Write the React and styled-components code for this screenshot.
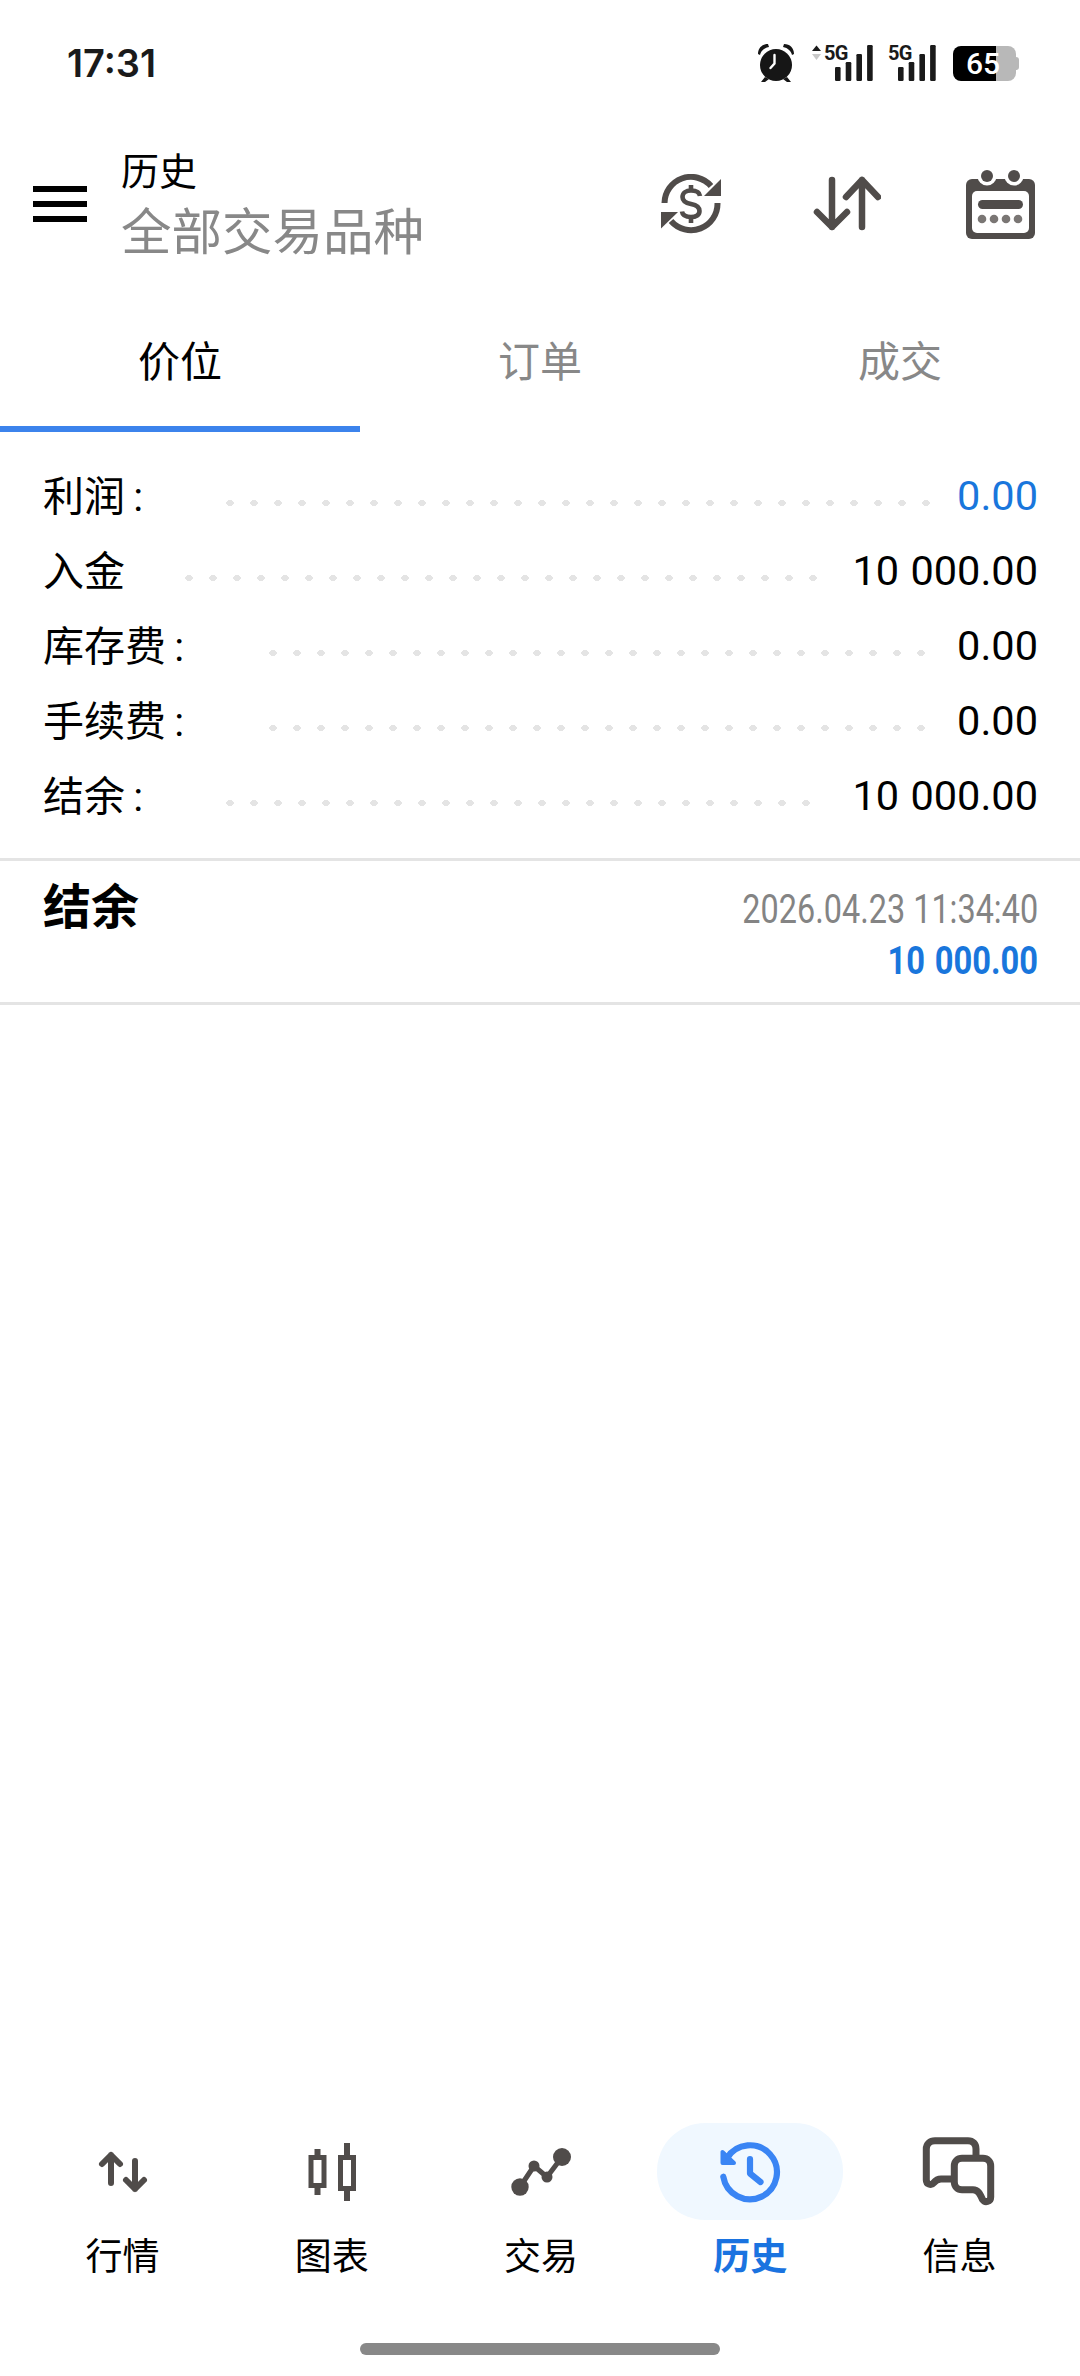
import React from 'react'
import styled, { createGlobalStyle } from 'styled-components'

const GlobalStyle = createGlobalStyle`
  html, body {
    margin: 0;
    padding: 0;
    background: #fff;
  }
  body {
    font-family: Roboto, "Noto Sans CJK SC", sans-serif;
  }
`

const ICON = '#504c4a'
const BLUE = '#1976dc'

const summary = [
  { label: '利润 :', col: 183, dots: 30, value: '0.00', blue: true },
  { label: '入金', col: 142, dots: 27, value: '10 000.00' },
  { label: '库存费 :', col: 226, dots: 28, value: '0.00' },
  { label: '手续费 :', col: 226, dots: 28, value: '0.00' },
  { label: '结余 :', col: 183, dots: 25, value: '10 000.00' },
]

const navItems = [
  { label: '行情', icon: <QuotesIcon /> },
  { label: '图表', icon: <ChartIcon /> },
  { label: '交易', icon: <TradeIcon /> },
  { label: '历史', icon: <HistoryIcon />, active: true },
  { label: '信息', icon: <MessagesIcon /> },
]

function AlarmIcon() {
  return (
    <svg width="40" height="42" viewBox="0 0 40 42">
      <circle cx="20" cy="23" r="16" fill="#161616" />
      <path d="M2 12 C2 6 6 2 12 2 L13 5 C8 6 5 9 4 13 Z" fill="#161616" />
      <path d="M38 12 C38 6 34 2 28 2 L27 5 C32 6 35 9 36 13 Z" fill="#161616" />
      <path d="M9 35 L5 40 H9 L13 37 Z M31 35 L35 40 H31 L27 37 Z" fill="#161616" />
      <path d="M18.5 13 V21.5 L14.5 26" fill="none" stroke="#fff" strokeWidth="2.4" strokeLinecap="round" />
    </svg>
  )
}

function SignalIcon({ arrows }) {
  const width = arrows ? 62 : 50
  const left = arrows ? 24 : 10
  const bars = [[22, 14], [17, 19], [9, 27], [0, 36]]
  return (
    <svg width={width} height="48" viewBox={`0 -4 ${width} 48`}>
      {arrows && (
        <>
          <path d="M1 8 L5.5 2.5 L10 8 Z" fill="#1a1a1a" />
          <path d="M1 11 L5.5 17 L10 11 Z" fill="#c8c8c8" />
        </>
      )}
      <text x={arrows ? 13 : 0} y="17" fontFamily="Roboto, sans-serif" fontWeight="700" fontSize="20" letterSpacing="-0.6" fill="#1a1a1a">5G</text>
      {bars.map(([y, h], i) => (
        <rect key={i} x={left + i * 10.7} y={y + 2} width="5.6" height={h} rx="1.2" fill="#1a1a1a" />
      ))}
    </svg>
  )
}

function SyncDollarIcon() {
  return (
    <svg width="60" height="60" viewBox="0 0 60 60" fill="none" stroke={ICON}>
      <path d="M3.5 29 A26.5 26.5 0 0 1 50 12" strokeWidth="6" />
      <path d="M56.5 29 A26.5 26.5 0 0 1 10 47" strokeWidth="6" />
      <path d="M60 5 V22 H43 Z" fill={ICON} stroke="none" />
      <path d="M0 38 H17 L0 54.5 Z" fill={ICON} stroke="none" />
      <path d="M39 22 C38.5 18 35 16.5 30 16.5 C25 16.5 21.5 19 21.5 23 C21.5 27 25 29 30 30 C35 31 38.5 33 38.5 37 C38.5 41 35 43 30 43 C25 43 21.5 41.5 21 37.5" strokeWidth="4.6" />
      <path d="M30 11 V16.5 M30 43 V49" strokeWidth="4.6" />
    </svg>
  )
}

function SortIcon() {
  return (
    <svg width="70" height="60" viewBox="0 0 70 60" fill="none" stroke={ICON} strokeWidth="6.5" strokeLinecap="round" strokeLinejoin="round">
      <path d="M21 6 V53 M6 38 L21 53 L36 38" />
      <path d="M51 6 V53 M35 23 L51 6 L67 23" />
    </svg>
  )
}

function CalendarIcon() {
  return (
    <svg width="69" height="69" viewBox="0 0 69 69">
      <rect x="0" y="9" width="69" height="60" rx="6" fill={ICON} />
      <circle cx="21" cy="6" r="9.5" fill="#fff" />
      <circle cx="48" cy="6" r="9.5" fill="#fff" />
      <circle cx="21" cy="6" r="6" fill={ICON} />
      <circle cx="48" cy="6" r="6" fill={ICON} />
      <rect x="6" y="21" width="57" height="42" rx="5" fill="#fff" />
      <rect x="12" y="30" width="45" height="9" rx="4.5" fill={ICON} />
      {[16, 28, 40, 52].map((cx) => (
        <circle key={cx} cx={cx} cy="49" r="4.3" fill="#7a7674" />
      ))}
    </svg>
  )
}

function QuotesIcon() {
  return (
    <svg width="52" height="48" viewBox="0 0 52 48" fill="none" stroke={ICON} strokeWidth="6" strokeLinecap="round" strokeLinejoin="round">
      <path d="M14 7 V35 M5 16 L14 7 L23 16" />
      <path d="M38 13 V41 M29 32 L38 41 L47 32" />
    </svg>
  )
}

function ChartIcon() {
  return (
    <svg width="54" height="66" viewBox="0 0 54 66" fill="none" stroke={ICON}>
      <rect x="6" y="18.5" width="13" height="28" strokeWidth="5" />
      <rect x="35.5" y="18.5" width="13" height="31" strokeWidth="5" />
      <path d="M12.5 10 V16 M12.5 49 V56 M42 4 V16 M42 52 V62" strokeWidth="6" />
    </svg>
  )
}

function TradeIcon() {
  return (
    <svg width="64" height="52" viewBox="0 0 64 52" fill={ICON}>
      <path d="M11 41 L25 20 L38 31 L53 11" fill="none" stroke={ICON} strokeWidth="5" strokeLinejoin="round" />
      <circle cx="11" cy="41" r="8.7" />
      <circle cx="25" cy="20" r="5.5" />
      <circle cx="38" cy="31" r="5.5" />
      <circle cx="53" cy="11" r="9" />
    </svg>
  )
}

function HistoryIcon() {
  return (
    <svg width="70" height="70" viewBox="14 7 70 70" fill="none" stroke="#3a85f4" strokeWidth="6.2" strokeLinecap="round" strokeLinejoin="round">
      <path d="M26 28 A27 27 0 1 1 22.3 46.7" />
      <path d="M21.5 22 V33 H33 Z" fill="#3a85f4" strokeWidth="4" />
      <path d="M49 29 V43.5 L59.5 52" />
    </svg>
  )
}

function MessagesIcon() {
  return (
    <svg width="76" height="72" viewBox="21 12 76 72" fill="none" stroke={ICON} strokeWidth="7" strokeLinejoin="round">
      <path d="M76 33 V25 C76 20 73 16.7 68 16.7 H35 C30 16.7 26.3 20 26.3 25 V56 C26.3 60 31 62 33.5 59 C35.5 56.5 38 55 41 55 H53" />
      <path d="M62 34.3 H83 C87.5 34.3 90.7 37.5 90.7 42 V73 C90.7 78 85 79 82.5 75.5 C80 70 78 65.7 73 65.7 H62 C57.5 65.7 54.3 62.5 54.3 58 V42 C54.3 37.5 57.5 34.3 62 34.3 Z" />
    </svg>
  )
}

export default function App() {
  return (
    <>
      <GlobalStyle />
      <Page>
        <StatusBar>
          <Clock>17:31</Clock>
          <StatusIcons>
            <AlarmIcon />
            <SignalIcon arrows />
            <SignalIcon />
            <Battery>65</Battery>
          </StatusIcons>
        </StatusBar>

        <Header>
          <Hamburger>
            <span />
            <span />
            <span />
          </Hamburger>
          <TitleBlock>
            <Title>历史</Title>
            <Subtitle>全部交易品种</Subtitle>
          </TitleBlock>
          <Actions>
            <ActionButton><SyncDollarIcon /></ActionButton>
            <ActionButton><SortIcon /></ActionButton>
            <ActionButton><CalendarIcon /></ActionButton>
          </Actions>
        </Header>

        <Tabs>
          <Tab $active>价位</Tab>
          <Tab>订单</Tab>
          <Tab>成交</Tab>
        </Tabs>

        <Summary>
          {summary.map((row) => (
            <Row key={row.label}>
              <RowLabel $col={row.col}>{row.label}</RowLabel>
              <Leader $dots={row.dots} />
              <RowValue $blue={row.blue}>{row.value}</RowValue>
            </Row>
          ))}
        </Summary>

        <Deal>
          <DealTitle>结余</DealTitle>
          <DealInfo>
            <DealDate>2026.04.23 11:34:40</DealDate>
            <DealAmount>10 000.00</DealAmount>
          </DealInfo>
        </Deal>

        <Spacer />

        <Nav>
          {navItems.map((item) => (
            <NavItem key={item.label}>
              <NavIcon $active={item.active}>{item.icon}</NavIcon>
              <NavLabel $active={item.active}>{item.label}</NavLabel>
            </NavItem>
          ))}
        </Nav>
        <HomeBar />
      </Page>
    </>
  )
}

const Page = styled.div`
  width: 1080px;
  height: 2376px;
  display: flex;
  flex-direction: column;
  overflow: hidden;
  background: #fff;
`

const StatusBar = styled.div`
  height: 126px;
  flex: none;
  display: flex;
  align-items: center;
  justify-content: space-between;
  padding: 0 61px 0 67px;
  box-sizing: border-box;
`

const Clock = styled.div`
  font-family: Inter, sans-serif;
  font-weight: 600;
  font-size: 38px;
  line-height: 44px;
  color: #1a1a1a;
`

const StatusIcons = styled.div`
  display: flex;
  align-items: center;
  gap: 15px;
`

const Battery = styled.div`
  position: relative;
  width: 63px;
  height: 35px;
  margin-right: 3px;
  padding-left: 13px;
  box-sizing: border-box;
  border-radius: 8px;
  background: linear-gradient(90deg, #000 43px, #b8b8b8 43px);
  color: #fff;
  font-weight: 500;
  font-size: 30px;
  line-height: 35px;
  &::after {
    content: '';
    position: absolute;
    right: -3px;
    top: 11px;
    width: 3px;
    height: 13px;
    border-radius: 0 3px 3px 0;
    background: #b8b8b8;
  }
`

const Header = styled.div`
  height: 164px;
  flex: none;
  display: flex;
  align-items: center;
  padding: 0 2px 8px 33px;
  box-sizing: border-box;
`

const Hamburger = styled.div`
  width: 54px;
  display: flex;
  flex-direction: column;
  gap: 9px;
  span {
    height: 6px;
    background: #000;
  }
`

const TitleBlock = styled.div`
  margin: 9px 0 0 34px;
`

const Title = styled.div`
  font-size: 38px;
  line-height: 49px;
  color: #000;
`

const Subtitle = styled.div`
  font-size: 50.5px;
  line-height: 72px;
  color: #888;
`

const Actions = styled.div`
  margin-left: auto;
  display: flex;
`

const ActionButton = styled.div`
  width: 155px;
  display: flex;
  justify-content: center;
  align-items: center;
`

const Tabs = styled.div`
  height: 142px;
  flex: none;
  display: grid;
  grid-template-columns: repeat(3, 1fr);
`

const Tab = styled.div`
  display: flex;
  align-items: center;
  justify-content: center;
  padding-bottom: 6px;
  font-size: 42px;
  color: ${(p) => (p.$active ? '#000' : '#888')};
  box-shadow: ${(p) => (p.$active ? 'inset 0 -6px 0 #3c83ec' : 'none')};
`

const Summary = styled.div`
  padding: 26px 42px 25px 43px;
  border-bottom: 3px solid #e4e4e4;
`

const Row = styled.div`
  height: 75px;
  display: flex;
  align-items: center;
`

const RowLabel = styled.div`
  width: ${(p) => p.$col}px;
  flex: none;
  margin-top: -6px;
  font-size: 41px;
  word-spacing: -2px;
  color: #000;
`

const Leader = styled.div`
  width: ${(p) => p.$dots * 24}px;
  height: 6px;
  margin-top: 15px;
  background-image: radial-gradient(ellipse 4px 3px at 4px 3px, #e4e4e4 92%, transparent 100%);
  background-size: 24px 6px;
  background-repeat: repeat-x;
`

const RowValue = styled.div`
  margin-left: auto;
  font-size: 41.5px;
  word-spacing: 1px;
  color: ${(p) => (p.$blue ? BLUE : '#000')};
`

const Deal = styled.div`
  height: 144px;
  flex: none;
  display: flex;
  justify-content: space-between;
  padding: 0 42px 0 43px;
  box-sizing: border-box;
  border-bottom: 3px solid #e4e4e4;
`

const DealTitle = styled.div`
  margin-top: 22px;
  font-weight: 700;
  font-size: 48px;
  line-height: 50px;
  color: #000;
`

const DealInfo = styled.div`
  margin-top: 27px;
  display: flex;
  flex-direction: column;
  align-items: flex-end;
  gap: 7px;
`

const DealDate = styled.div`
  font-size: 40px;
  line-height: 44px;
  color: #848484;
  white-space: nowrap;
  transform: scaleX(0.81);
  transform-origin: right center;
`

const DealAmount = styled.div`
  font-weight: 700;
  font-size: 38px;
  line-height: 44px;
  word-spacing: 2px;
  color: ${BLUE};
  white-space: nowrap;
  transform: scaleX(0.86);
  transform-origin: right center;
`

const Spacer = styled.div`
  flex: 1;
`

const Nav = styled.div`
  flex: none;
  display: grid;
  grid-template-columns: repeat(5, 1fr);
  padding: 0 16px 0 18px;
`

const NavItem = styled.div`
  display: flex;
  flex-direction: column;
  align-items: center;
`

const NavIcon = styled.div`
  width: 186px;
  height: 97px;
  display: flex;
  align-items: center;
  justify-content: center;
  border-radius: 48px;
  background: ${(p) => (p.$active ? '#f0f8ff' : 'transparent')};
`

const NavLabel = styled.div`
  margin-top: 18px;
  font-size: 37px;
  line-height: 40px;
  font-weight: ${(p) => (p.$active ? 700 : 400)};
  color: ${(p) => (p.$active ? '#1a73e0' : '#000')};
`

const HomeBar = styled.div`
  flex: none;
  width: 360px;
  height: 12px;
  margin: 65px auto 21px;
  border-radius: 6px;
  background: #888;
`
